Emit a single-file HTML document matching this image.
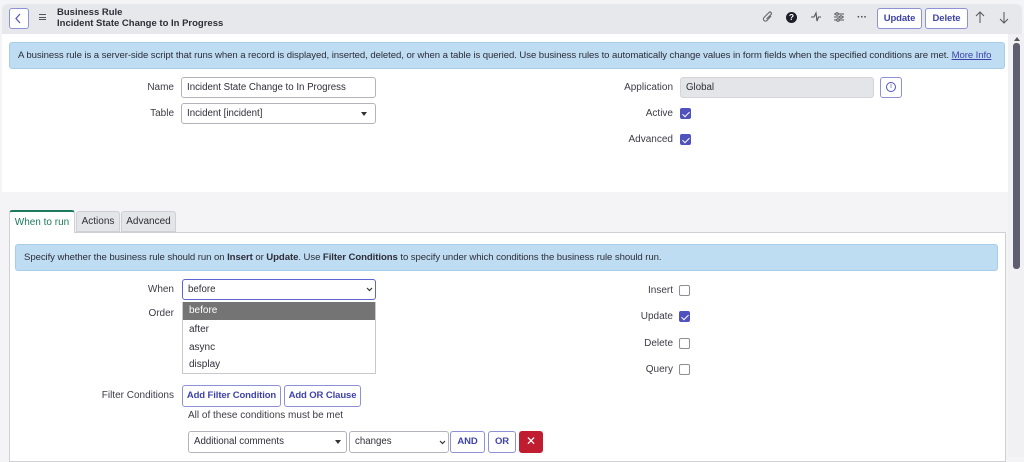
<!DOCTYPE html>
<html><head><style>
*{box-sizing:border-box;margin:0;padding:0}
body{width:1024px;height:457px;overflow:hidden;background:#f4f4f6;font-family:"Liberation Sans",sans-serif;font-size:10px;color:#2e2e38;position:relative}
.a{position:absolute;white-space:nowrap}
.lbl{position:absolute;text-align:right;font-size:10px;color:#3c3c46}
.inp{position:absolute;border:1px solid #b3b3bd;border-radius:3px;background:#fff;padding:0 5px;line-height:19px;font-size:9.7px;height:21px;white-space:nowrap}
.cb{position:absolute;width:11px;height:11px;border:1px solid #8e8e98;border-radius:2px;background:#fff}
.cb.on{background:#4f52bd;border-color:#4f52bd}
.cb.on:after{content:"";position:absolute;left:3px;top:1px;width:3px;height:6px;border:solid #fff;border-width:0 1px 1px 0;transform:rotate(45deg)}
.btn{position:absolute;border:1px solid #8f91d6;border-radius:3px;background:#fff;color:#3f43a8;font-weight:bold;font-size:9.5px;text-align:center;white-space:nowrap;letter-spacing:-0.1px}
.info{position:absolute;background:#bedcf2;border:1px solid #a8cde8;border-radius:3px;font-size:9.6px;color:#2e2e38;padding-left:8px;white-space:nowrap;letter-spacing:-0.08px;overflow:hidden}
</style></head><body>
<div class="a" style="left:2px;top:4px;width:1020px;height:30px;background:#e7e8eb;border-radius:6px 6px 0 0"></div>
<div class="a" style="left:9px;top:8px;width:20px;height:21px;border:1px solid #8f91d6;border-radius:3px;background:#fff"></div>
<svg class="a" style="left:14px;top:13px" width="10" height="11"><path d="M6 1L2 5.5L6 10" stroke="#4f52bd" fill="none" stroke-width="1.2"/></svg>
<div class="a" style="left:39px;top:14px;width:7px;height:6px;border-top:1px solid #555;border-bottom:1px solid #555"></div>
<div class="a" style="left:39px;top:16.5px;width:7px;height:1px;background:#555"></div>
<div class="a" style="left:57px;top:7px;font-weight:bold;font-size:9.5px;line-height:11px">Business Rule<br>Incident State Change to In Progress</div>
<svg class="a" style="left:762px;top:11px" width="12" height="13"><path d="M9 5L5 9.5a2 2 0 0 1-3-3L7 1.5a1.3 1.3 0 0 1 2 2L4.5 8" stroke="#666" fill="none" stroke-width="1.1"/></svg>
<div class="a" style="left:786px;top:12px;width:11px;height:11px;border-radius:50%;background:#1e1e2a;color:#fff;font-weight:bold;font-size:8.5px;text-align:center;line-height:11px">?</div>
<svg class="a" style="left:810px;top:11px" width="12" height="12"><path d="M1 6H4L6 2L7 10L8.5 6H11" stroke="#555" fill="none" stroke-width="1.1"/></svg>
<svg class="a" style="left:833px;top:11px" width="12" height="12"><path d="M1 3H11M1 6H11M1 9H11" stroke="#555" stroke-width="1"/><circle cx="4" cy="3" r="1.3" fill="#e7e8eb" stroke="#555"/><circle cx="8" cy="6" r="1.3" fill="#e7e8eb" stroke="#555"/><circle cx="5" cy="9" r="1.3" fill="#e7e8eb" stroke="#555"/></svg>
<div class="a" style="left:857px;top:12px;font-weight:bold;color:#444">···</div>
<div class="btn" style="left:877px;top:8px;width:45px;height:21px;line-height:19px">Update</div>
<div class="btn" style="left:925px;top:8px;width:43px;height:21px;line-height:19px">Delete</div>
<svg class="a" style="left:975px;top:11px" width="10" height="13"><path d="M5 12V1M1 5L5 1L9 5" stroke="#555" fill="none" stroke-width="1"/></svg>
<svg class="a" style="left:999px;top:11px" width="10" height="13"><path d="M5 1V12M1 8L5 12L9 8" stroke="#555" fill="none" stroke-width="1"/></svg>
<div class="a" style="left:2px;top:34px;width:1006px;height:158px;background:#fff"></div>
<div class="a" style="left:1008px;top:34px;width:16px;height:423px;background:#f1f1f3"></div>
<div class="a" style="left:1013px;top:43px;width:7px;height:226px;background:#5e5e6e;border-radius:3px"></div>
<div class="a" style="left:1014px;top:37px;width:0;height:0;border:3px solid transparent;border-bottom:4px solid #555;border-top:0"></div>
<div class="info" style="left:9px;top:42px;width:996px;height:27px;line-height:25px">A business rule is a server-side script that runs when a record is displayed, inserted, deleted, or when a table is queried. Use business rules to automatically change values in form fields when the specified conditions are met. <span style="color:#3f43a8;text-decoration:underline">More Info</span></div>
<div class="lbl" style="left:100px;top:82px;width:74px">Name</div>
<div class="inp" style="left:181px;top:77px;width:195px">Incident State Change to In Progress</div>
<div class="lbl" style="left:100px;top:108px;width:74px">Table</div>
<div class="inp" style="left:181px;top:103px;width:195px">Incident [incident]</div>
<div class="a" style="left:361px;top:112px;border:3px solid transparent;border-top:4px solid #333"></div>
<div class="lbl" style="left:560px;top:82px;width:113px">Application</div>
<div class="inp" style="left:680px;top:77px;width:194px;background:#e4e5e8;border-color:#d4d4da">Global</div>
<div class="a" style="left:880px;top:77px;width:22px;height:21px;border:1px solid #8f91d6;border-radius:3px;background:#fff"></div>
<div class="a" style="left:886px;top:82px;width:10px;height:10px;border:1px solid #4f52bd;border-radius:50%;font-size:7px;color:#4f52bd;text-align:center;line-height:8px">i</div>
<div class="lbl" style="left:560px;top:108px;width:113px">Active</div>
<div class="cb on" style="left:680px;top:108px"></div>
<div class="lbl" style="left:560px;top:134px;width:113px">Advanced</div>
<div class="cb on" style="left:680px;top:134px"></div>
<div class="a" style="left:9px;top:232px;width:997px;height:230px;background:#fff;border:1px solid #cfcfd5"></div>
<div class="a" style="left:9px;top:210px;width:66px;height:23px;background:#fff;border:1px solid #cfcfd5;border-bottom:none;border-top:2px solid #1d7a5c;color:#1d7a5c;text-align:center;line-height:21px;border-radius:3px 3px 0 0">When to run</div>
<div class="a" style="left:76px;top:211px;width:44px;height:21px;background:#e4e5e8;border:1px solid #cfcfd5;text-align:center;line-height:20px;border-radius:3px 3px 0 0">Actions</div>
<div class="a" style="left:121px;top:211px;width:55px;height:21px;background:#e4e5e8;border:1px solid #cfcfd5;text-align:center;line-height:20px;border-radius:3px 3px 0 0">Advanced</div>
<div class="info" style="left:15px;top:244px;width:983px;height:27px;line-height:25px">Specify whether the business rule should run on <b>Insert</b> or <b>Update</b>. Use <b>Filter Conditions</b> to specify under which conditions the business rule should run.</div>
<div class="lbl" style="left:100px;top:284px;width:74px">When</div>
<div class="inp" style="left:182px;top:279px;width:194px;border:1.5px solid #5f63cf">before</div>
<svg class="a" style="left:366px;top:287px" width="7" height="5"><path d="M1 1L3.5 3.5L6 1" stroke="#333" fill="none" stroke-width="1.2"/></svg>
<div class="lbl" style="left:100px;top:308px;width:74px">Order</div>
<div class="a" style="left:182px;top:302px;width:194px;height:72px;background:#fff;border:1px solid #c8c8ce"></div>
<div class="a" style="left:183px;top:302px;width:192px;height:18px;background:#747474;color:#fff;padding-left:6px;line-height:18px">before</div>
<div class="a" style="left:189px;top:321px;line-height:17.5px">after<br>async<br>display</div>
<div class="lbl" style="left:560px;top:285px;width:113px">Insert</div>
<div class="cb" style="left:679px;top:285px"></div>
<div class="lbl" style="left:560px;top:311px;width:113px">Update</div>
<div class="cb on" style="left:679px;top:311px"></div>
<div class="lbl" style="left:560px;top:338px;width:113px">Delete</div>
<div class="cb" style="left:679px;top:338px"></div>
<div class="lbl" style="left:560px;top:364px;width:113px">Query</div>
<div class="cb" style="left:679px;top:364px"></div>
<div class="lbl" style="left:60px;top:390px;width:114px">Filter Conditions</div>
<div class="btn" style="left:182px;top:385px;width:99px;height:22px;line-height:20px">Add Filter Condition</div>
<div class="btn" style="left:284px;top:385px;width:77px;height:22px;line-height:20px">Add OR Clause</div>
<div class="a" style="left:188px;top:410px;color:#3c3c46">All of these conditions must be met</div>
<div class="inp" style="left:188px;top:431px;width:159px;height:22px;line-height:20px">Additional comments</div>
<div class="a" style="left:335px;top:440px;border:3px solid transparent;border-top:4px solid #333"></div>
<div class="inp" style="left:349px;top:431px;width:100px;height:22px;line-height:20px">changes</div>
<svg class="a" style="left:439px;top:440px" width="7" height="5"><path d="M1 1L3.5 3.5L6 1" stroke="#333" fill="none" stroke-width="1.2"/></svg>
<div class="btn" style="left:450px;top:431px;width:35px;height:22px;line-height:20px">AND</div>
<div class="btn" style="left:488px;top:431px;width:28px;height:22px;line-height:20px">OR</div>
<div class="a" style="left:519px;top:431px;width:24px;height:22px;background:#c01e30;border-radius:3px;color:#fff;text-align:center;line-height:21px;font-size:12px">✕</div>
</body></html>
